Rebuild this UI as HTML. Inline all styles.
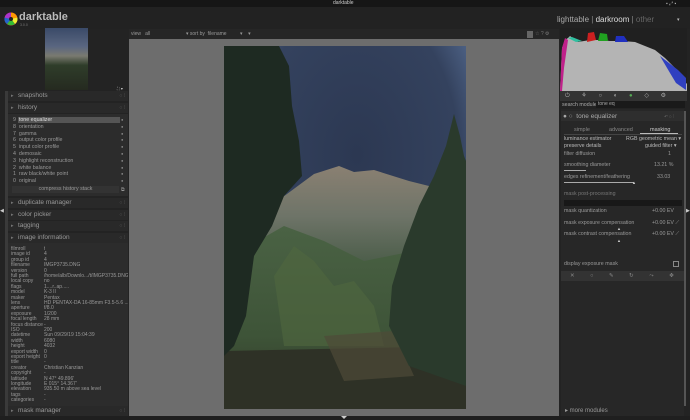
<!DOCTYPE html>
<html><head><meta charset="utf-8"><style>
*{margin:0;padding:0;box-sizing:border-box}
body{width:690px;height:420px;background:#1f1f1f;font-family:"Liberation Sans","DejaVu Sans",sans-serif;color:#aaa;position:relative;overflow:hidden;font-size:5.5px}
.a{position:absolute;white-space:nowrap}
.hd{position:absolute;left:8px;width:120px;height:10px;background:#292929;font-size:6.5px;color:#999;padding-left:10px;line-height:10px}
.hd:before{content:"▸";position:absolute;left:3px;font-size:5px;color:#777}
.hd:after{content:"○ ⁞";position:absolute;right:3px;font-size:5px;color:#555}
.r{position:absolute;font-size:5.3px;color:#999;line-height:6px}
.ii{position:absolute;left:11px;width:117px;height:6px;font-size:5px;line-height:6px;color:#999;white-space:nowrap;overflow:visible}
.ii span{position:absolute;left:33px;max-width:84px;overflow:hidden}
</style></head><body>
<div class="a" style="left:0;top:0;width:690px;height:7px;background:#161616"></div>
<div class="a" style="left:333px;top:0;font-size:5px;color:#ccc">darktable</div>
<div class="a" style="left:342px;top:7px;width:0;height:0;border-left:3px solid transparent;border-right:3px solid transparent;border-bottom:3px solid #ccc"></div>
<div class="a" style="left:0;top:7px;width:690px;height:22px;background:#222"></div>
<svg class="a" style="left:4px;top:12px" width="14" height="14" viewBox="0 0 14 14">
<circle cx="7" cy="7" r="6.5" fill="#e33"/><path d="M7 7L7 .5A6.5 6.5 0 0 1 13.3 5.5Z" fill="#f90"/><path d="M7 7L13.3 5.5A6.5 6.5 0 0 1 11 12Z" fill="#ee3"/><path d="M7 7L11 12A6.5 6.5 0 0 1 3 12Z" fill="#3b3"/><path d="M7 7L3 12A6.5 6.5 0 0 1 .6 5.5Z" fill="#26c"/><path d="M7 7L.6 5.5A6.5 6.5 0 0 1 7 .5Z" fill="#a3c"/><circle cx="7" cy="7" r="2" fill="#222"/></svg>
<div class="a" style="left:19px;top:11px;font-size:11px;font-weight:bold;color:#bbb">darktable</div>
<div class="a" style="left:20px;top:23px;font-size:3.5px;color:#777">3.0.0</div>
<div class="a" style="left:557px;top:15px;font-size:8px;color:#aaa">lighttable <span style="color:#888">|</span> <span style="color:#ddd">darkroom</span> <span style="color:#888">|</span> <span style="color:#666">other</span></div>
<div class="a" style="left:677px;top:17px;font-size:5px;color:#bbb">▾</div>
<div class="a" style="left:666px;top:1px;font-size:5px;color:#aaa">▪ ⤢ ▪</div>
<div class="a" style="left:0;top:29px;width:129px;height:387px;background:#232323"></div>
<div class="a" style="left:45px;top:28px;width:43px;height:62px;background:linear-gradient(#3a4a68,#5a6680 30%,#7a7a70 45%,#2f3d2a 60%,#252a20)"></div>
<div class="a" style="left:117px;top:86px;font-size:4px;color:#ccc">⛶ ▾</div>
<div class="a" style="left:5px;top:91px;width:3px;height:325px;background:#3a3a3a"></div>
<div class="hd" style="top:91px">snapshots</div>
<div class="hd" style="top:103px">history</div>
<div class="a" style="left:8px;top:114px;width:120px;height:82px;background:#2c2c2c"></div>
<div class="a" style="left:18px;top:117px;width:102px;height:6px;background:#555"></div>
<div class="r" style="left:13px;top:117px;line-height:6.8px">9&nbsp; <span style="color:#ddd">tone equalizer</span><br>8&nbsp; orientation<br>7&nbsp; gamma<br>6&nbsp; output color profile<br>5&nbsp; input color profile<br>4&nbsp; demosaic<br>3&nbsp; highlight reconstruction<br>2&nbsp; white balance<br>1&nbsp; raw black/white point<br>0&nbsp; original</div>
<div class="r" style="left:121px;top:117px;line-height:6.8px;font-size:4px;color:#888">●<br>●<br>●<br>●<br>●<br>●<br>●<br>●<br>●<br>●</div>
<div class="a" style="left:12px;top:186px;width:107px;height:7px;background:#333;font-size:5.3px;text-align:center;line-height:7px;color:#999">compress history stack</div>
<div class="a" style="left:121px;top:187px;font-size:5px;color:#999">⧉</div>
<div class="hd" style="top:198px">duplicate manager</div>
<div class="hd" style="top:210px">color picker</div>
<div class="hd" style="top:221px">tagging</div>
<div class="hd" style="top:233px">image information</div>
<div class="a" style="left:8px;top:243px;width:120px;height:163px;background:#2c2c2c"></div>
<div class="ii" style="top:246.0px">filmroll<span>t</span></div>
<div class="ii" style="top:251.4px">image id<span>4</span></div>
<div class="ii" style="top:256.8px">group id<span>4</span></div>
<div class="ii" style="top:262.2px">filename<span>IMGP3735.DNG</span></div>
<div class="ii" style="top:267.6px">version<span>0</span></div>
<div class="ii" style="top:273.0px">full path<span>/home/alb/Downlo.../t/IMGP3735.DNG</span></div>
<div class="ii" style="top:278.4px">local copy<span>no</span></div>
<div class="ii" style="top:283.8px">flags<span>1....r..ap.....</span></div>
<div class="ii" style="top:289.2px">model<span>K-3 II</span></div>
<div class="ii" style="top:294.6px">maker<span>Pentax</span></div>
<div class="ii" style="top:300.0px">lens<span>HD PENTAX-DA 16-85mm F3.5-5.6 ...</span></div>
<div class="ii" style="top:305.4px">aperture<span>f/8.0</span></div>
<div class="ii" style="top:310.8px">exposure<span>1/200</span></div>
<div class="ii" style="top:316.2px">focal length<span>28 mm</span></div>
<div class="ii" style="top:321.6px">focus distance<span>-</span></div>
<div class="ii" style="top:327.0px">ISO<span>200</span></div>
<div class="ii" style="top:332.4px">datetime<span>Sun 09/29/19 15:04:39</span></div>
<div class="ii" style="top:337.8px">width<span>6080</span></div>
<div class="ii" style="top:343.2px">height<span>4032</span></div>
<div class="ii" style="top:348.6px">export width<span>0</span></div>
<div class="ii" style="top:354.0px">export height<span>0</span></div>
<div class="ii" style="top:359.4px">title<span>-</span></div>
<div class="ii" style="top:364.8px">creator<span>Christian Kanzian</span></div>
<div class="ii" style="top:370.2px">copyright<span>-</span></div>
<div class="ii" style="top:375.6px">latitude<span>N 47° 49.896'</span></div>
<div class="ii" style="top:381.0px">longitude<span>E 015° 14.367'</span></div>
<div class="ii" style="top:386.4px">elevation<span>935.50 m above sea level</span></div>
<div class="ii" style="top:391.8px">tags<span>-</span></div>
<div class="ii" style="top:397.2px">categories<span>-</span></div>
<div class="hd" style="top:406px">mask manager</div>
<div class="a" style="left:0;top:208px;font-size:5px;color:#ccc">◀</div>
<div class="a" style="left:129px;top:29px;width:430px;height:10px;background:#262626"></div>
<div class="a" style="left:131px;top:31px;font-size:5px;color:#999">view&nbsp;&nbsp; all</div>
<div class="a" style="left:186px;top:31px;font-size:5px;color:#999">▾ sort by&nbsp; filename</div>
<div class="a" style="left:240px;top:31px;font-size:5px;color:#999">▾&nbsp;&nbsp;&nbsp; ▾</div>
<div class="a" style="left:527px;top:31px;width:6px;height:7px;background:#666"></div>
<div class="a" style="left:535px;top:31px;font-size:5px;color:#777">☆ ? ⚙</div>
<div class="a" style="left:129px;top:39px;width:430px;height:377px;background:#6d6d6d"></div>
<svg class="a" style="left:224px;top:46px" width="242" height="363" viewBox="0 0 242 363">
<defs>
<radialGradient id="sk" cx="0.55" cy="0.3" r="0.7"><stop offset="0" stop-color="#2c3852"/><stop offset="0.6" stop-color="#34425e"/><stop offset="1" stop-color="#6a86b2"/></radialGradient>
<linearGradient id="mt" x1="0" y1="0" x2="0" y2="1"><stop offset="0" stop-color="#8a8072"/><stop offset="0.5" stop-color="#6e7468"/><stop offset="1" stop-color="#4a5c48"/></linearGradient>
<linearGradient id="fo" x1="0" y1="0" x2="0" y2="1"><stop offset="0" stop-color="#4a6244"/><stop offset="0.6" stop-color="#3e5438"/><stop offset="1" stop-color="#2e3626"/></linearGradient>
</defs>
<rect width="242" height="363" fill="url(#sk)"/>
<path d="M40 165 L90 128 L115 120 L130 126 L150 124 L185 135 L205 140 L200 220 L40 215Z" fill="url(#mt)"/>
<path d="M25 200 L60 180 L100 195 L140 215 L190 205 L200 363 L0 363 L0 200Z" fill="url(#fo)"/>
<path d="M50 230 L70 200 L90 215 L110 240 L130 235 L150 260 L160 300 L60 300Z" fill="#50683f" opacity="0.6"/>
<path d="M0 305 L242 300 L242 363 L0 363Z" fill="#2e3126"/>
<path d="M100 290 L170 285 L190 330 L120 335Z" fill="#4e4a38" opacity="0.7"/>
<path d="M0 0 L55 0 L65 20 L68 60 L75 95 L78 130 L60 150 L48 180 L30 210 L22 270 L10 300 L0 310Z" fill="#1e2a22"/>
<path d="M230 68 L236 90 L240 110 L242 115 L242 340 L185 320 L165 280 L168 240 L180 200 L195 160 L210 130 L222 100Z" fill="#2a3a2c"/>
</svg>
<div class="a" style="left:341px;top:416px;width:0;height:0;border-left:3px solid transparent;border-right:3px solid transparent;border-top:3px solid #ccc"></div>
<div class="a" style="left:559px;top:29px;width:131px;height:387px;background:#232323"></div>
<svg class="a" style="left:560px;top:28px" width="127" height="63" viewBox="0 0 127 63">
<rect width="127" height="63" fill="#202020"/>
<path d="M0 63 L2 20 L5 12 L8 10 L10 8 L18 14 L30 12 L40 12 L50 13 L62 13 L75 14 L85 18 L95 22 L105 30 L115 40 L122 50 L127 56 L127 63Z" fill="#b4b4b4"/>
<path d="M0 63 L2 20 L5 10 L8 12 L4 40 L2 63Z" fill="#c0208a"/>
<path d="M27 14 L28 5 L34 4 L36 12Z" fill="#cc2020"/>
<path d="M38 13 L40 5 L47 6 L48 13Z" fill="#20a020"/>
<path d="M55 14 L56 8 L64 8 L68 14Z" fill="#2030c0"/>
<path d="M100 28 L118 42 L126 50 L126 62 L116 55 L110 45Z" fill="#3040c0"/>
<path d="M8 10 L12 9 L22 13 L16 14Z" fill="#30c0a0"/>
</svg>
<div class="a" style="left:560px;top:91px;width:127px;height:10px;background:#333;font-size:6px;color:#aaa;line-height:10px;word-spacing:10px;padding-left:5px">⏻ ⚘ ○ ◐ <span style="color:#5a5">●</span> ◇ ⚙</div>
<div class="a" style="left:562px;top:102px;font-size:5.3px;color:#aaa">search module</div>
<div class="a" style="left:596px;top:101px;width:89px;height:7px;background:#1a1a1a;font-size:5px;color:#aaa;padding-left:2px;line-height:7px">tone eq</div>
<div class="a" style="left:561px;top:109px;width:123px;height:307px;background:#272727"></div>
<div class="a" style="left:561px;top:111px;width:123px;height:10px;background:#2e2e2e"></div>
<div class="a" style="left:563px;top:113px;font-size:6.5px;color:#aaa">● ○&nbsp; tone equalizer</div>
<div class="a" style="left:664px;top:114px;font-size:4.5px;color:#666">↶ ○ ⁞</div>
<div class="a" style="left:574px;top:127px;font-size:5.5px;color:#888">simple</div>
<div class="a" style="left:609px;top:127px;font-size:5.5px;color:#888">advanced</div>
<div class="a" style="left:650px;top:127px;font-size:5.5px;color:#ccc">masking</div>
<div class="a" style="left:640px;top:133px;width:38px;height:1px;background:#bbb"></div>
<div class="a" style="left:564px;top:134px;width:118px;height:1px;background:#444"></div>
<div class="r" style="left:564px;top:136px;color:#bbb">luminance estimator</div><div class="r" style="left:626px;top:136px;color:#bbb">RGB geometric mean ▾</div>
<div class="r" style="left:564px;top:143px;color:#bbb">preserve details</div><div class="r" style="left:645px;top:143px;color:#bbb">guided filter ▾</div>
<div class="r" style="left:564px;top:151px">filter diffusion</div><div class="r" style="left:668px;top:151px">1</div>
<div class="r" style="left:564px;top:162px">smoothing diameter</div><div class="r" style="left:654px;top:162px">13.21 %</div>
<div class="a" style="left:564px;top:170px;width:22px;height:1px;background:#aaa"></div>
<div class="r" style="left:564px;top:174px">edges refinement/feathering</div><div class="r" style="left:657px;top:174px">33.03</div>
<div class="a" style="left:564px;top:182px;width:70px;height:1px;background:#aaa"></div>
<div class="a" style="left:632px;top:180px;font-size:4px;color:#ccc">▲</div>
<div class="r" style="left:564px;top:191px;color:#777">mask post-processing</div>
<div class="a" style="left:564px;top:200px;width:118px;height:6px;background:#181818"></div>
<div class="r" style="left:564px;top:208px">mask quantization</div><div class="r" style="left:652px;top:208px">+0.00 EV</div>
<div class="r" style="left:564px;top:220px">mask exposure compensation</div><div class="r" style="left:652px;top:220px">+0.00 EV ⟋</div>
<div class="a" style="left:617px;top:226px;font-size:4px;color:#ccc">▲</div>
<div class="r" style="left:564px;top:231px">mask contrast compensation</div><div class="r" style="left:652px;top:231px">+0.00 EV ⟋</div>
<div class="a" style="left:617px;top:238px;font-size:4px;color:#ccc">▲</div>
<div class="r" style="left:564px;top:261px">display exposure mask</div>
<div class="a" style="left:673px;top:261px;width:6px;height:6px;border:1px solid #888"></div>
<div class="a" style="left:561px;top:271px;width:123px;height:10px;background:#333;font-size:5.5px;color:#888;line-height:10px;word-spacing:14px;padding-left:9px">✕ ○ ✎ ↻ ⤳ ✥</div>
<div class="a" style="left:684px;top:111px;width:2px;height:295px;background:#555"></div>
<div class="a" style="left:565px;top:407px;font-size:6px;color:#999">▸ more modules</div>
<div class="a" style="left:686px;top:208px;font-size:5px;color:#ccc">▶</div>
</body></html>
